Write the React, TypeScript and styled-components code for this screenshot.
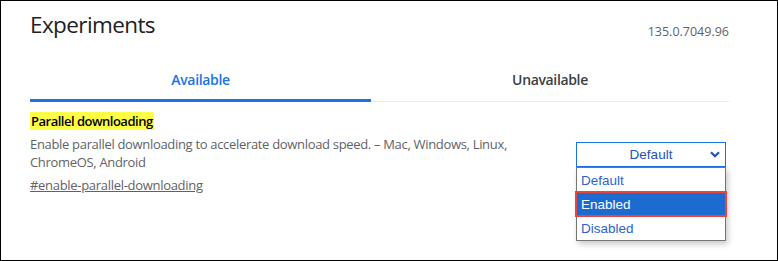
import styled, { createGlobalStyle } from 'styled-components'

const GlobalStyle = createGlobalStyle`
  html, body {
    margin: 0;
    padding: 0;
    background: #ffffff;
  }
  body {
    font-family: 'Open Sans', 'Noto Sans', sans-serif;
  }
`

const Frame = styled.div`
  width: 778px;
  height: 261px;
  box-sizing: border-box;
  border: 1px solid #000;
  padding: 0 48px 0 29px;
  background: #fff;
  overflow: hidden;
`

const Header = styled.header`
  display: flex;
  justify-content: space-between;
  align-items: flex-end;
  height: 42px;
`

const Title = styled.h1`
  margin: 0;
  font-size: 22.5px;
  font-weight: 400;
  letter-spacing: -0.6px;
  line-height: 30px;
  color: #202124;
  align-self: flex-start;
  padding-top: 9px;
`

const Version = styled.div`
  font-size: 12.5px;
  color: #5f6368;
  line-height: 16px;
  padding-bottom: 3px;
`

const Tabs = styled.nav`
  display: grid;
  grid-template-columns: 341px 1fr;
  border-bottom: 1px solid #e8eaed;
  margin-top: 16px;
`

const Tab = styled.div<{ $active?: boolean }>`
  height: 43px;
  margin-bottom: -1px;
  padding-top: 1px;
  display: flex;
  align-items: center;
  justify-content: center;
  font-size: 14px;
  font-weight: 600;
  letter-spacing: -0.35px;
  color: ${({ $active }) => ($active ? '#1a73e8' : '#3c4043')};
  border-bottom: 3px solid ${({ $active }) => ($active ? '#1a73e8' : 'transparent')};
  box-sizing: border-box;
`

const Experiment = styled.section`
  display: flex;
  justify-content: space-between;
  align-items: center;
  margin-top: 7px;
`

const Info = styled.div`
  width: 500px;
`

const Name = styled.h2`
  display: inline-block;
  margin: 0;
  padding: 0 1px;
  font-size: 13px;
  font-weight: 600;
  letter-spacing: -0.5px;
  line-height: 18px;
  color: #000;
  background: #ffff45;
`

const Description = styled.p`
  margin: 4px 0 0;
  font-size: 13px;
  letter-spacing: -0.32px;
  line-height: 18px;
  color: #5f6368;
`

const Permalink = styled.a`
  display: inline-block;
  margin-top: 5px;
  font-size: 13px;
  letter-spacing: -0.3px;
  line-height: 18px;
  color: #5f6368;
  text-decoration: underline;
`

const SelectWrap = styled.div`
  position: relative;
  width: 150px;
  margin: 5px 3px 0 0;
`

const SelectBox = styled.div`
  height: 25px;
  box-sizing: border-box;
  border: 1px solid #1a73e8;
  display: flex;
  align-items: center;
  justify-content: center;
  font-family: 'Liberation Sans', Arial, sans-serif;
  font-size: 13.5px;
  color: #2451b8;
  position: relative;
`

const Chevron = styled.svg`
  position: absolute;
  right: 5px;
  top: 8px;
`

const Menu = styled.ul`
  position: absolute;
  left: 0;
  top: 25px;
  width: 150px;
  box-sizing: border-box;
  margin: 0;
  padding: 0;
  list-style: none;
  background: #fff;
  border: 1px solid #767676;
  box-shadow: 2px 3px 6px rgba(0, 0, 0, 0.22);
`

const Option = styled.li<{ $selected?: boolean }>`
  height: 24px;
  box-sizing: border-box;
  display: flex;
  align-items: center;
  margin: 0 -1px;
  padding-left: 5px;
  font-family: 'Liberation Sans', Arial, sans-serif;
  font-size: 13.5px;
  color: ${({ $selected }) => ($selected ? '#fff' : '#2f5fcf')};
  background: ${({ $selected }) => ($selected ? '#1c6bd0' : 'transparent')};
  outline: ${({ $selected }) => ($selected ? '2px solid #e8453c' : 'none')};
  outline-offset: -1px;
`

export default function App() {
  return (
    <>
      <GlobalStyle />
      <Frame>
        <Header>
          <Title>Experiments</Title>
          <Version>135.0.7049.96</Version>
        </Header>
        <Tabs>
          <Tab $active>Available</Tab>
          <Tab>Unavailable</Tab>
        </Tabs>
        <Experiment>
          <Info>
            <Name>Parallel downloading</Name>
            <Description>
              Enable parallel downloading to accelerate download speed. – Mac, Windows, Linux,
              ChromeOS, Android
            </Description>
            <Permalink>#enable-parallel-downloading</Permalink>
          </Info>
          <SelectWrap>
            <SelectBox>
              Default
              <Chevron width="10" height="7" viewBox="0 0 10 7">
                <path d="M1 1.2 L5 5.2 L9 1.2" fill="none" stroke="#2451b8" strokeWidth="2.2" />
              </Chevron>
            </SelectBox>
            <Menu>
              <Option>Default</Option>
              <Option $selected>Enabled</Option>
              <Option>Disabled</Option>
            </Menu>
          </SelectWrap>
        </Experiment>
      </Frame>
    </>
  )
}
